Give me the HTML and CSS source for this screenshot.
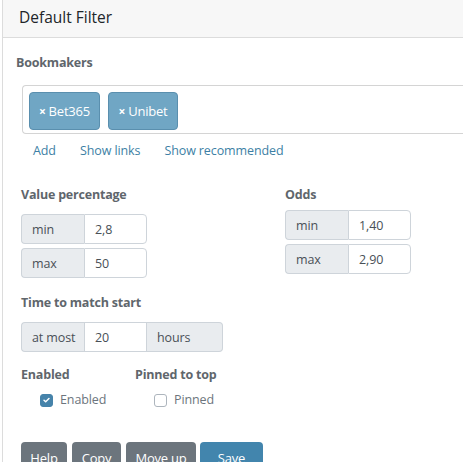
FILE: index.html
```html
<!DOCTYPE html>
<html>
<head>
<meta charset="utf-8">
<link rel="stylesheet" href="styles.css">
</head>
<body>
<div class="card">
  <div class="card-header">Default Filter</div>
  <div class="card-body">
    <div class="section-title bm">Bookmakers</div>
    <div class="tagbox">
      <span class="tag"><span class="x">×</span> Bet365</span>
      <span class="tag"><span class="x">×</span> Unibet</span>
    </div>
    <div class="links">
      <a class="link">Add</a>
      <a class="link">Show links</a>
      <a class="link">Show recommended</a>
    </div>
    <div class="range-row">
      <div class="col col-value">
        <div class="section-title">Value percentage</div>
        <div class="igroup"><span class="addon">min</span><span class="field">2,8</span></div>
        <div class="igroup"><span class="addon">max</span><span class="field">50</span></div>
      </div>
      <div class="col col-odds">
        <div class="section-title">Odds</div>
        <div class="igroup"><span class="addon">min</span><span class="field">1,40</span></div>
        <div class="igroup"><span class="addon">max</span><span class="field">2,90</span></div>
      </div>
    </div>
    <div class="section-title time">Time to match start</div>
    <div class="igroup"><span class="addon">at most</span><span class="field">20</span><span class="addon addon-end">hours</span></div>
    <div class="checks">
      <div class="check-col col-enabled">
        <div class="section-title">Enabled</div>
        <label class="check"><span class="box checked"><svg viewBox="0 0 12 12" width="12" height="12"><path d="M3.3 6.2 L5.1 7.9 L8.7 4.3" fill="none" stroke="#fff" stroke-width="1.6" stroke-linecap="round" stroke-linejoin="round"/></svg></span>Enabled</label>
      </div>
      <div class="check-col">
        <div class="section-title">Pinned to top</div>
        <label class="check"><span class="box"></span>Pinned</label>
      </div>
    </div>
    <div class="buttons">
      <span class="btn btn-gray btn-help">Help</span>
      <span class="btn btn-gray btn-copy">Copy</span>
      <span class="btn btn-gray btn-move">Move up</span>
      <span class="btn btn-blue btn-save">Save</span>
    </div>
  </div>
</div>
</body>
</html>
```

FILE: styles.css
```css
* { box-sizing: border-box; }
html, body { margin: 0; padding: 0; background: #fff; }
body {
  font-family: "Open Sans", "Noto Sans", sans-serif;
  font-size: 12.5px;
  letter-spacing: -0.1px;
  color: #495057;
  width: 463px;
  height: 462px;
  overflow: hidden;
}
.card {
  margin-left: 2px;
  border-left: 1px solid #dcdcdc;
  width: 520px;
  height: 470px;
}
.card-header {
  height: 38px;
  background: #f7f7f7;
  border-bottom: 1px solid #dcdcdc;
  padding: 7px 0 0 16px;
  font-size: 15.5px;
  line-height: 21px;
  color: #212529;
  letter-spacing: 0;
}
.card-body { padding: 0; }
.section-title {
  font-weight: 700;
  color: #60666c;
  font-size: 12.5px;
  line-height: 18px;
  letter-spacing: -0.2px;
}
.bm { margin: 16px 0 0 13px; }
.tagbox {
  margin: 13px 0 0 19px;
  height: 49px;
  border: 1px solid #d4d4d4;
  border-radius: 4px;
  border-right: none;
  padding: 6px 0 0 6px;
  display: flex;
  gap: 8px;
}
.tag {
  display: flex;
  align-items: center;
  justify-content: center;
  height: 38px;
  padding: 0 8px;
  background: #70a6c4;
  border: 1px solid #5a8fae;
  border-radius: 4px;
  color: #fff;
  font-size: 13px;
  letter-spacing: -0.2px;
}
.tag .x { font-weight: 700; margin-right: 3px; font-size: 12px; }
.tag:first-child { width: 71px; }
.tag:nth-child(2) { width: 70px; }
.links {
  display: flex;
  margin: 8px 0 0 30px;
  line-height: 18px;
}
.link {
  color: #3d7fa5;
  margin-right: 24px;
}
.range-row {
  display: flex;
  margin: 26px 0 0 18px;
}
.col { width: 264px; flex-shrink: 0; }
.col .section-title { margin-bottom: 10px; }
.col-odds .section-title { margin-bottom: 6px; }
.igroup {
  display: flex;
  height: 30px;
  margin-bottom: 4px;
  width: max-content;
}
.addon {
  display: flex;
  align-items: center;
  width: 63px;
  padding-left: 10px;
  background: #e9ecef;
  border: 1px solid #ced4da;
  border-right: none;
  border-radius: 4px 0 0 4px;
  color: #495057;
}
.field {
  display: flex;
  align-items: center;
  width: 63px;
  padding-left: 10px;
  background: #fff;
  border: 1px solid #ced4da;
  border-radius: 0 4px 4px 0;
  color: #495057;
}
.time { margin: 12px 0 0 18px; }
.time + .igroup { margin: 10px 0 0 18px; }
.time + .igroup .field { border-radius: 0; }
.addon-end {
  width: 76px;
  border-right: 1px solid #ced4da;
  border-left: none;
  border-radius: 0 4px 4px 0;
}
.checks {
  display: flex;
  margin: 14px 0 0 18px;
}
.check-col { display: flex; flex-direction: column; }
.col-enabled { width: 114px; }
.check {
  display: flex;
  align-items: center;
  margin: 7px 0 0 19px;
  line-height: 18px;
  color: #6c757d;
}
.box {
  width: 13px;
  height: 13px;
  border: 1px solid #adb5bd;
  border-radius: 3px;
  margin-right: 7px;
  display: flex;
  align-items: center;
  justify-content: center;
  background: #fff;
}
.box.checked { background: #4683aa; border-color: #4683aa; }
.buttons {
  display: flex;
  gap: 5px;
  margin: 33px 0 0 18px;
}
.btn {
  display: flex;
  justify-content: center;
  padding-top: 7px;
  line-height: 18px;
  height: 30px;
  border-radius: 4px 4px 0 0;
  color: #fff;
  font-size: 13px;
  letter-spacing: -0.2px;
}
.btn-gray { background: #6c757d; }
.btn-blue { background: #4285ad; }
.btn-help { width: 46px; }
.btn-copy { width: 49px; }
.btn-move { width: 70px; margin-right: -1px; }
.btn-save { width: 63px; }
```
